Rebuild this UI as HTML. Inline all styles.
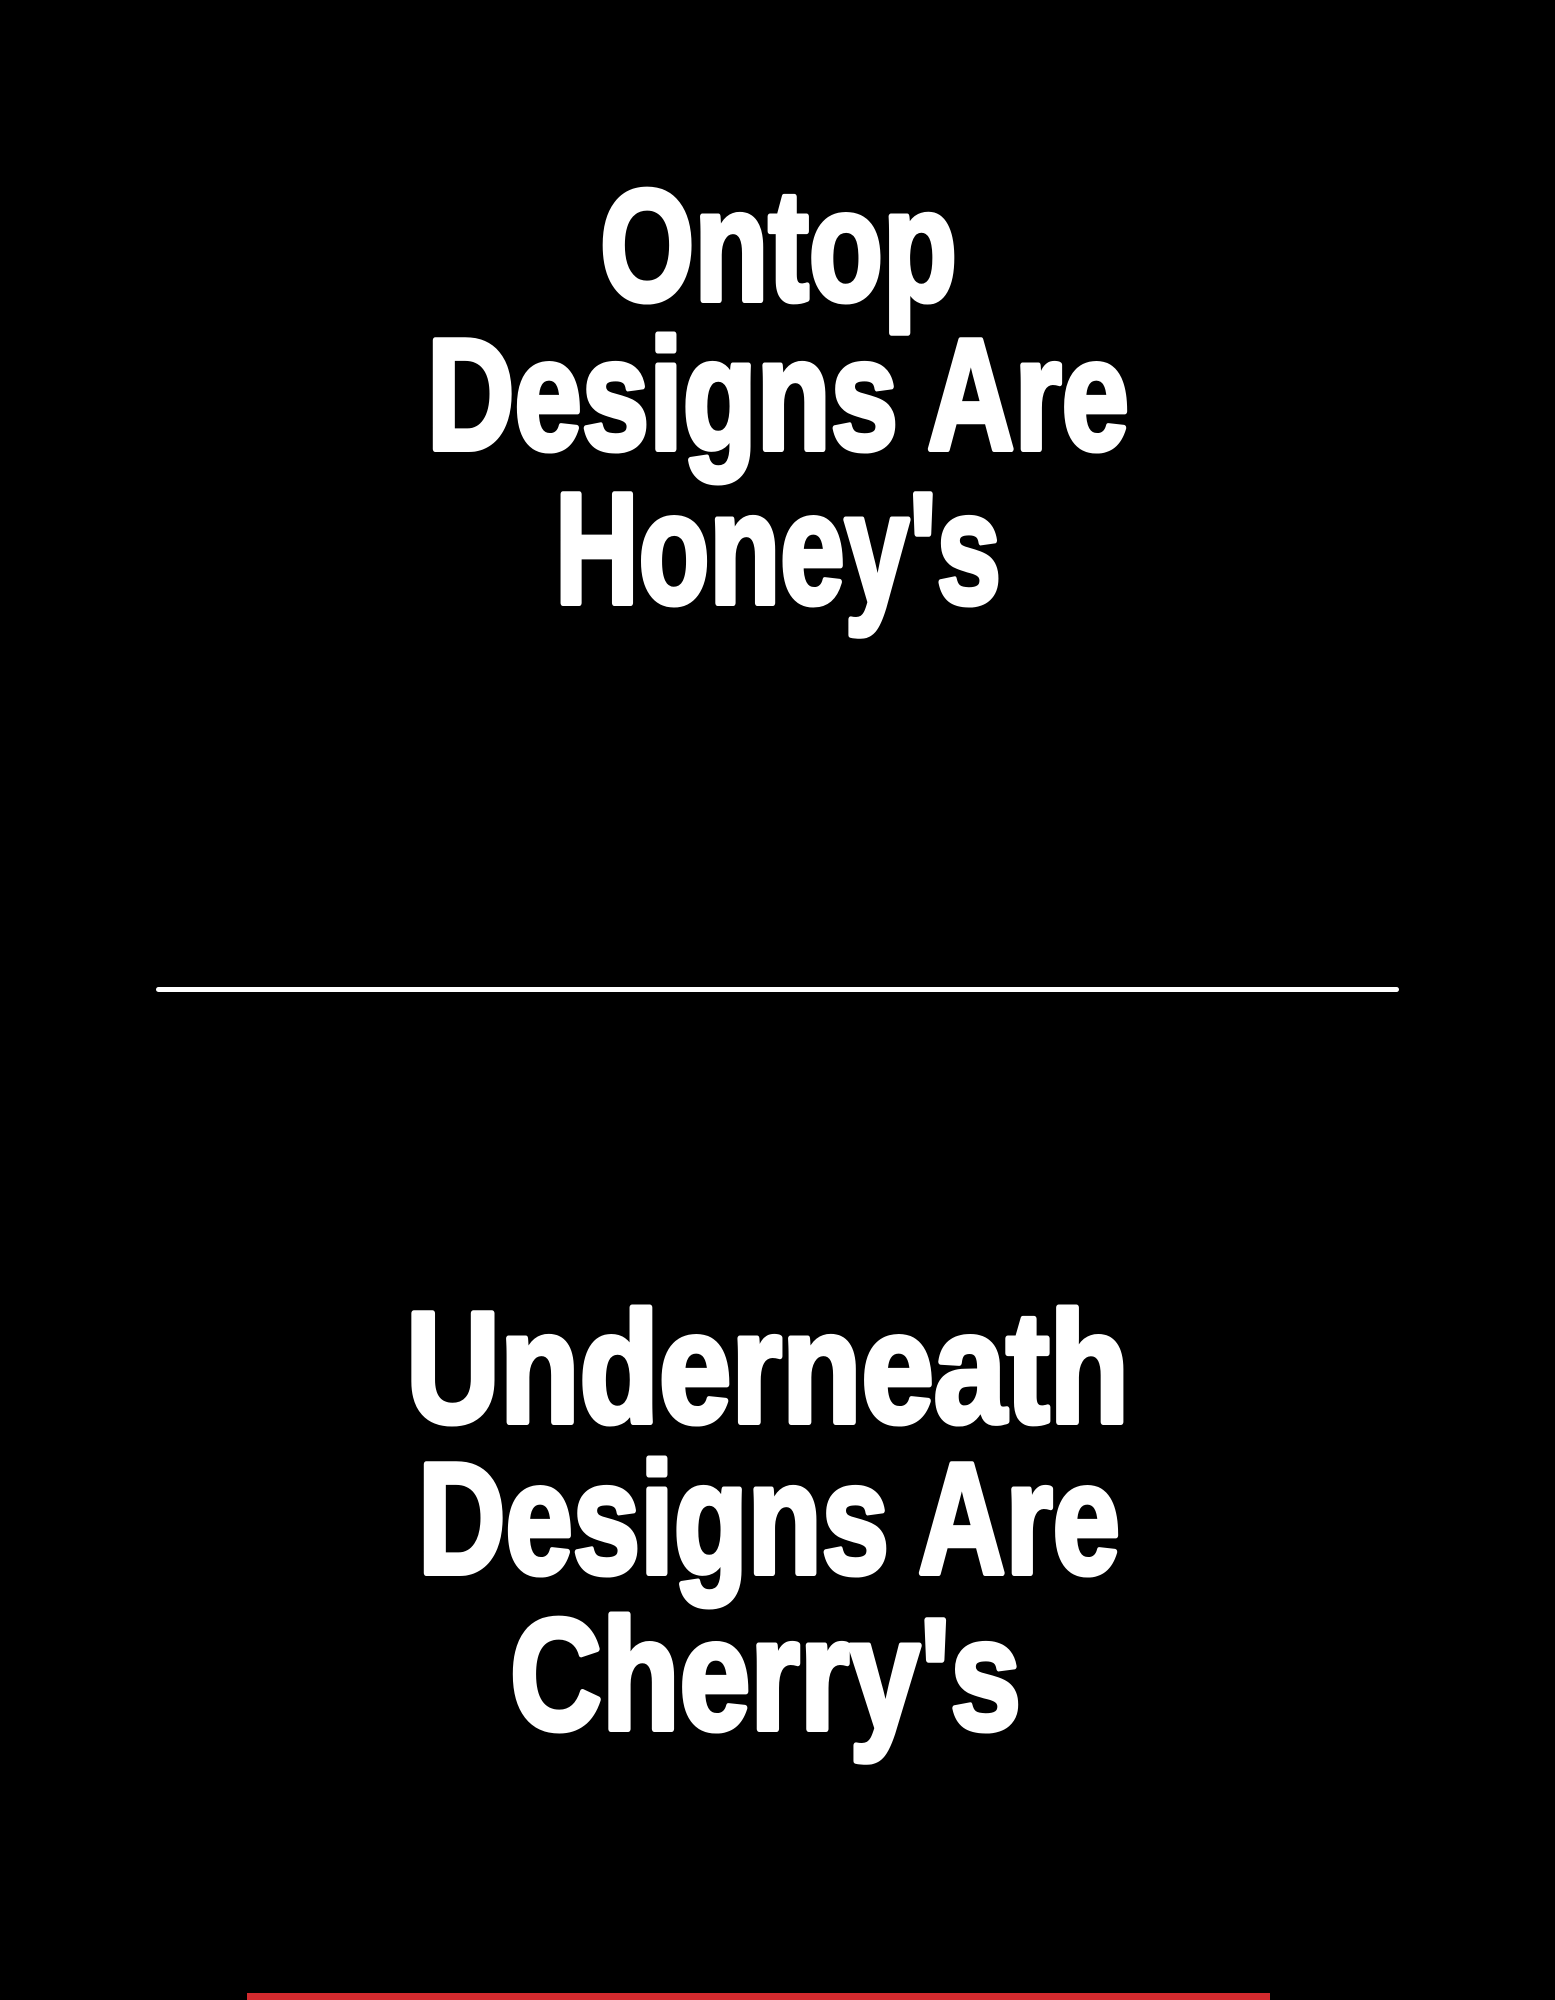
<!DOCTYPE html>
<html><head><meta charset="utf-8"><style>
html,body{margin:0;padding:0;background:#000;width:1555px;height:2000px;overflow:hidden}
</style></head><body>
<svg width="1555" height="2000" viewBox="0 0 1555 2000" xmlns="http://www.w3.org/2000/svg" style="display:block">
<rect width="1555" height="2000" fill="#000"/>
<g fill="#fff" stroke="#fff" stroke-width="6" stroke-linejoin="round" font-family="Liberation Sans, sans-serif" font-weight="bold" font-size="158">
<text x="600" y="300" textLength="357" lengthAdjust="spacingAndGlyphs">Ontop</text>
<text x="427" y="449" textLength="702" lengthAdjust="spacingAndGlyphs">Designs Are</text>
<text x="555" y="603" textLength="446" lengthAdjust="spacingAndGlyphs">Honey's</text>
<text x="406" y="1422" textLength="723" lengthAdjust="spacingAndGlyphs">Underneath</text>
<text x="418" y="1573" textLength="702" lengthAdjust="spacingAndGlyphs">Designs Are</text>
<text x="510" y="1729" textLength="511" lengthAdjust="spacingAndGlyphs">Cherry's</text>
</g>
<rect x="156" y="987" width="1243" height="5" rx="2.5" fill="#fff"/>
<rect x="247" y="1993" width="1023" height="7" fill="#d32a2e"/>
</svg>
</body></html>
